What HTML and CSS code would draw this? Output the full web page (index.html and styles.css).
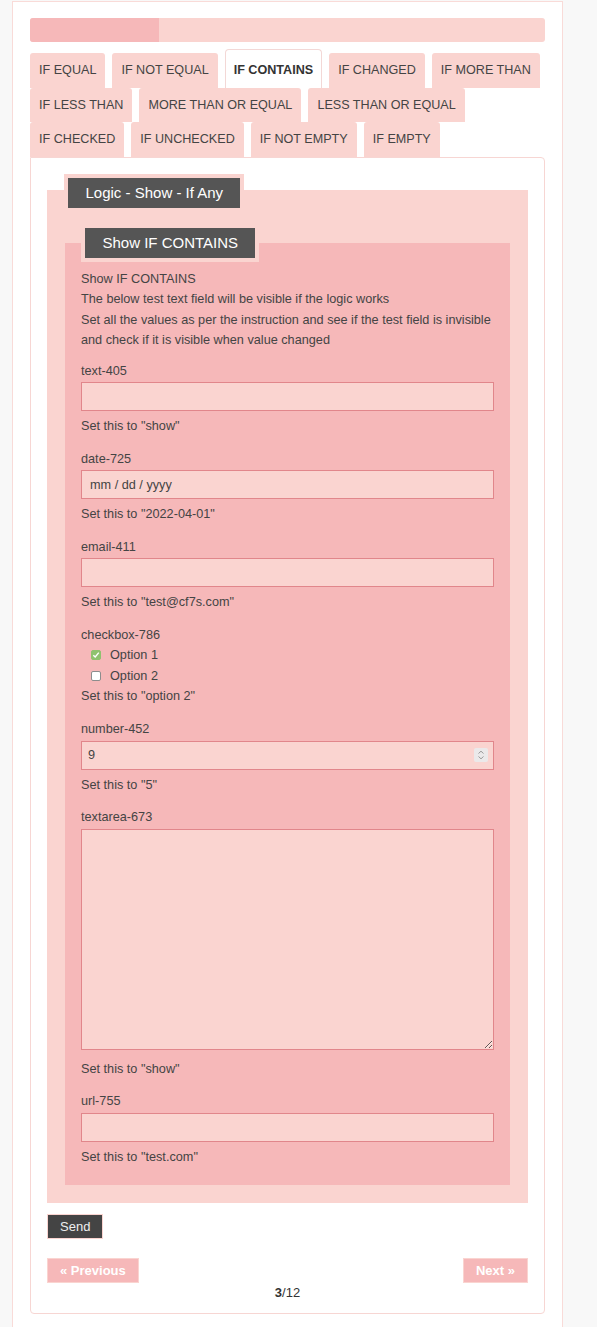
FILE: index.html
```html
<!DOCTYPE html>
<html lang="en">
<head>
<meta charset="utf-8">
<title>Logic - Show - If Any</title>
<link rel="stylesheet" href="styles.css">
</head>
<body>
<div class="page">
  <div class="progress"><div class="progress-fill" style="width:25%"></div></div>
  <ul class="tabs">
    <li class="tab">IF EQUAL</li>
    <li class="tab">IF NOT EQUAL</li>
    <li class="tab active">IF CONTAINS</li>
    <li class="tab">IF CHANGED</li>
    <li class="tab">IF MORE THAN</li>
    <li class="tab">IF LESS THAN</li>
    <li class="tab">MORE THAN OR EQUAL</li>
    <li class="tab">LESS THAN OR EQUAL</li>
    <li class="tab">IF CHECKED</li>
    <li class="tab">IF UNCHECKED</li>
    <li class="tab">IF NOT EMPTY</li>
    <li class="tab">IF EMPTY</li>
  </ul>
  <div class="panel">
    <div class="fs fs-outer">
      <div class="legend legend-outer">Logic - Show - If Any</div>
      <div class="fs fs-inner">
        <div class="legend legend-inner">Show IF CONTAINS</div>
        <div class="intro">Show IF CONTAINS<br>The below test text field will be visible if the logic works<br>Set all the values as per the instruction and see if the test field is invisible<br>and check if it is visible when value changed</div>

        <div class="group">
          <div class="label">text-405</div>
          <input class="field" type="text">
          <div class="help">Set this to "show"</div>
        </div>

        <div class="group">
          <div class="label">date-725</div>
          <input class="field" type="text" placeholder="mm / dd / yyyy">
          <div class="help">Set this to "2022-04-01"</div>
        </div>

        <div class="group">
          <div class="label">email-411</div>
          <input class="field" type="text">
          <div class="help">Set this to "test@cf7s.com"</div>
        </div>

        <div class="group group-check">
          <div class="label">checkbox-786</div>
          <div class="option"><span class="box checked"><svg width="8" height="8" viewBox="0 0 8 8"><polyline points="1.3,4.2 3.2,6 6.8,1.6" fill="none" stroke="#fff" stroke-width="1.4"/></svg></span>Option 1</div>
          <div class="option"><span class="box"></span>Option 2</div>
          <div class="help">Set this to "option 2"</div>
        </div>

        <div class="group">
          <div class="label">number-452</div>
          <div class="field number"><span>9</span><svg class="spin" width="14" height="14" viewBox="0 0 14 14"><rect width="14" height="14" rx="2" fill="#ebe9ea"/><polyline points="4.5,5.5 7,3.2 9.5,5.5" fill="none" stroke="#9a9a9a" stroke-width="1"/><polyline points="4.5,8.5 7,10.8 9.5,8.5" fill="none" stroke="#9a9a9a" stroke-width="1"/></svg></div>
          <div class="help">Set this to "5"</div>
        </div>

        <div class="group">
          <div class="label">textarea-673</div>
          <textarea class="field area"></textarea>
          <div class="help">Set this to "show"</div>
        </div>

        <div class="group last">
          <div class="label">url-755</div>
          <input class="field" type="text">
          <div class="help">Set this to "test.com"</div>
        </div>
      </div>
    </div>
    <div class="actions"><button class="send" type="button">Send</button></div>
    <div class="nav">
      <button class="nav-btn" type="button">« Previous</button>
      <button class="nav-btn" type="button">Next »</button>
    </div>
    <div class="pager"><b>3</b>/12</div>
  </div>
</div>
</body>
</html>
```

FILE: styles.css
```css
* { box-sizing: border-box; }

html, body {
  margin: 0;
  padding: 0;
}

body {
  background: #f8f8f8;
  font-family: "Liberation Sans", Arial, Helvetica, sans-serif;
  color: #444;
}

.page {
  width: 551px;
  margin: 1px 0 0 12px;
  background: #fff;
  border: 1px solid #f9dbd8;
  border-bottom: 0;
  padding: 16px 17px 20px;
}

.progress {
  height: 24px;
  background: #fad4d0;
  border-radius: 3px;
  overflow: hidden;
}

.progress-fill {
  height: 100%;
  background: #f6b8b9;
}

.tabs {
  list-style: none;
  margin: 7px 0 0;
  padding: 0;
  display: flex;
  flex-wrap: wrap;
  align-items: flex-end;
  column-gap: 7px;
}

.tab {
  background: #fad4d0;
  font-size: 12.6px;
  line-height: 17px;
  padding: 9px 9px 8.5px;
  border-radius: 3px 3px 0 0;
  color: #444;
  white-space: nowrap;
}

.tab.active {
  background: #fff;
  border: 1px solid #f3d8d6;
  border-bottom: 0;
  padding: 12px 8px 8.5px;
  font-weight: bold;
  color: #333;
  border-radius: 4px 4px 0 0;
}

.panel {
  border: 1px solid #f7d6d3;
  border-radius: 0 4px 4px 4px;
  padding: 32px 16px 12px;
}

.fs {
  display: flow-root;
}

.fs-outer {
  background: #fad4d0;
  padding: 0 18px 18px;
}

.fs-inner {
  background: #f6b8b9;
  margin-top: 31px;
  padding: 0 16px 18px;
}

.legend {
  width: fit-content;
  background: #555;
  color: #fff;
  border: 4px solid #fad4d0;
  font-size: 15px;
  line-height: 30px;
  padding: 0 17px 0 17.5px;
}

.legend-outer {
  margin: -16px 0 0 -1px;
}

.legend-inner {
  margin: -19px 0 0 0;
}

.intro {
  margin-top: 7px;
  margin-bottom: 10px;
  font-size: 12.7px;
  line-height: 20.5px;
}

.group {
  font-size: 12.7px;
  line-height: 20.5px;
  margin-bottom: 12px;
}

.group.group-check {
  margin-bottom: 12.5px;
}

.group.last {
  margin-bottom: 0;
}

.field {
  display: block;
  width: 100%;
  height: 29px;
  margin: 1px 0 5px;
  padding: 0 8px;
  border: 1px solid #e1868b;
  background: #fad4d0;
  font-family: inherit;
  font-size: 12.7px;
  color: #444;
  border-radius: 0;
  outline: none;
}

.field::placeholder {
  color: #444;
  opacity: 1;
}

.field.number {
  display: flex;
  align-items: center;
  justify-content: space-between;
  padding: 0 5px 0 6px;
}

.spin {
  display: block;
}

.field.area {
  height: 221px;
  resize: vertical;
  margin-bottom: 9px;
  padding: 6px 8px;
}

.option {
  display: flex;
  align-items: center;
  gap: 9px;
  padding-left: 10px;
}

.box {
  width: 10px;
  height: 10px;
  border: 1px solid #8d8d8d;
  background: #fff;
  border-radius: 2px;
  display: flex;
  align-items: center;
  justify-content: center;
}

.box.checked {
  background: #8fc26f;
  border-color: #8fc26f;
}

.actions {
  margin-top: 11px;
}

.send {
  display: block;
  background: #444;
  color: #eee;
  border: 1px solid #fad4d0;
  font-family: inherit;
  font-size: 13px;
  line-height: 23px;
  height: 25px;
  padding: 0 12px;
  border-radius: 0;
}

.nav {
  margin-top: 19px;
  display: flex;
  justify-content: space-between;
}

.nav-btn {
  background: #f6b8b9;
  color: #fff;
  border: 1px solid #fad4d0;
  font-family: inherit;
  font-weight: bold;
  font-size: 13px;
  line-height: 23px;
  height: 25px;
  padding: 0 12px;
  border-radius: 0;
}

.pager {
  text-align: center;
  font-size: 13px;
  line-height: 17px;
  color: #333;
  margin-top: 1px;
}
```
